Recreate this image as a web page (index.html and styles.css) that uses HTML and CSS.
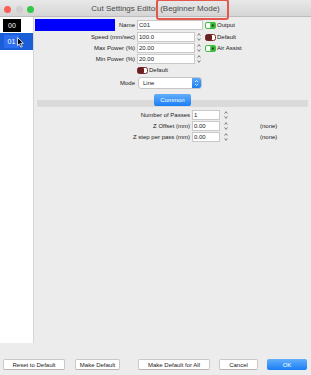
FILE: index.html
```html
<!DOCTYPE html>
<html lang="en">
<head>
    <meta charset="UTF-8">
    <title>Cut Settings Editor</title>
    <link rel="stylesheet" href="styles.css">
</head>
<body>
    <div class="titlebar">
        <div class="lights">
            <span class="light red"></span>
            <span class="light idle"></span>
            <span class="light green"></span>
        </div>
        <div class="title">Cut Settings Editor <span class="mark">(Beginner Mode)</span></div>
        <div></div>
    </div>

    <div class="main">
        <div class="layers">
            <div class="layer"><span class="tag tag-black">00</span></div>
            <div class="layer selected">
                <span class="tag tag-blue">01</span>
                <svg class="cursor" width="7" height="11" viewBox="0 0 7 11"><path d="M0.5 0.5 L0.5 8.6 L2.4 6.8 L3.8 10.2 L5.2 9.6 L3.8 6.3 L6.4 6.3 Z" fill="#000" stroke="#fff" stroke-width="0.8" stroke-linejoin="round"/></svg>
            </div>
        </div>

        <div class="settings">
            <div class="form">
                <div class="label name-cell"><span class="color-bar"></span><span>Name</span></div>
                <div class="field"><input class="input input-name" value="C01"></div>
                <div class="check"><svg class="toggle" width="11" height="7" viewBox="0 0 11 7"><rect x="0.5" y="0.5" width="10" height="6" rx="1.5" fill="#fff" stroke="#3dbf3d"/><rect x="5.2" y="0.5" width="5.3" height="6" rx="1" fill="#3dbf3d"/><rect x="6.8" y="2.5" width="2" height="2" fill="#1c3a1c"/></svg>Output</div>

                <div class="label">Speed (mm/sec)</div>
                <div class="field"><input class="input" value="100.0"><svg class="spin" width="4" height="10" viewBox="0 0 4 10"><path d="M0.6 3.6 L2 1.6 L3.4 3.6 M0.6 6.4 L2 8.4 L3.4 6.4" fill="none" stroke="#555" stroke-width="0.7"/></svg></div>
                <div class="check"><svg class="toggle" width="11" height="7" viewBox="0 0 11 7"><rect x="0.5" y="0.5" width="10" height="6" rx="2" fill="#fff" stroke="#7a2b2b"/><rect x="0.5" y="0.5" width="6.5" height="6" rx="1.5" fill="#6b1f1f"/></svg>Default</div>

                <div class="label">Max Power (%)</div>
                <div class="field"><input class="input" value="20.00"><svg class="spin" width="4" height="10" viewBox="0 0 4 10"><path d="M0.6 3.6 L2 1.6 L3.4 3.6 M0.6 6.4 L2 8.4 L3.4 6.4" fill="none" stroke="#555" stroke-width="0.7"/></svg></div>
                <div class="check"><svg class="toggle" width="11" height="7" viewBox="0 0 11 7"><rect x="0.5" y="0.5" width="10" height="6" rx="1.5" fill="#fff" stroke="#3dbf3d"/><rect x="5.2" y="0.5" width="5.3" height="6" rx="1" fill="#3dbf3d"/><rect x="6.8" y="2.5" width="2" height="2" fill="#1c3a1c"/></svg>Air Assist</div>

                <div class="label">Min Power (%)</div>
                <div class="field"><input class="input" value="20.00"><svg class="spin" width="4" height="10" viewBox="0 0 4 10"><path d="M0.6 3.6 L2 1.6 L3.4 3.6 M0.6 6.4 L2 8.4 L3.4 6.4" fill="none" stroke="#555" stroke-width="0.7"/></svg></div>
                <div></div>

                <div></div>
                <div class="check"><svg class="toggle" width="11" height="7" viewBox="0 0 11 7"><rect x="0.5" y="0.5" width="10" height="6" rx="2" fill="#fff" stroke="#7a2b2b"/><rect x="0.5" y="0.5" width="6.5" height="6" rx="1.5" fill="#6b1f1f"/></svg>Default</div>
                <div></div>

                <div class="label">Mode</div>
                <div class="field">
                    <div class="select"><span class="select-text">Line</span><span class="stepper"><svg width="5" height="8" viewBox="0 0 5 8"><path d="M1 3 L2.5 1.5 L4 3 M1 5 L2.5 6.5 L4 5" fill="none" stroke="#fff" stroke-width="0.8"/></svg></span></div>
                </div>
                <div></div>
            </div>

            <div class="tabs"><button class="tab">Common</button></div>

            <div class="common">
                <div class="label">Number of Passes</div>
                <input class="input" value="1">
                <svg class="spin" width="4" height="10" viewBox="0 0 4 10"><path d="M0.6 3.6 L2 1.6 L3.4 3.6 M0.6 6.4 L2 8.4 L3.4 6.4" fill="none" stroke="#555" stroke-width="0.7"/></svg>
                <div></div>

                <div class="label">Z Offset (mm)</div>
                <input class="input" value="0.00">
                <svg class="spin" width="4" height="10" viewBox="0 0 4 10"><path d="M0.6 3.6 L2 1.6 L3.4 3.6 M0.6 6.4 L2 8.4 L3.4 6.4" fill="none" stroke="#555" stroke-width="0.7"/></svg>
                <div class="note">(none)</div>

                <div class="label">Z step per pass (mm)</div>
                <input class="input" value="0.00">
                <svg class="spin" width="4" height="10" viewBox="0 0 4 10"><path d="M0.6 3.6 L2 1.6 L3.4 3.6 M0.6 6.4 L2 8.4 L3.4 6.4" fill="none" stroke="#555" stroke-width="0.7"/></svg>
                <div class="note">(none)</div>
            </div>
        </div>
    </div>

    <div class="footer">
        <button class="btn btn-reset">Reset to Default</button>
        <button class="btn btn-make">Make Default</button>
        <button class="btn btn-all">Make Default for All</button>
        <button class="btn btn-cancel">Cancel</button>
        <button class="btn btn-ok">OK</button>
    </div>
</body>
</html>
```

FILE: styles.css
```css
body {
    margin: 0;
    width: 311px;
    height: 375px;
    overflow: hidden;
    background-color: #ececec;
    font-family: 'Liberation Sans', Arial, sans-serif;
    font-size: 6px;
    color: #1a1a1a;
}
.titlebar {
    height: 17px;
    box-sizing: border-box;
    display: grid;
    grid-template-columns: 1fr auto 1fr;
    align-items: center;
    background: linear-gradient(#e9e9e9, #d5d5d5);
    border-bottom: 1px solid #bcbcbc;
}
.lights {
    display: flex;
    gap: 4.5px;
    padding-left: 4px;
    padding-top: 1px;
}
.light {
    width: 7px;
    height: 7px;
    border-radius: 50%;
}
.red {
    background-color: #fc5f57;
}
.idle {
    background-color: #d0d0d0;
}
.green {
    background-color: #34c84a;
}
.title {
    font-size: 8px;
    color: #4a4a4a;
    line-height: 17px;
    white-space: nowrap;
}
.mark {
    display: inline-block;
    position: relative;
}
.mark::after {
    content: '';
    position: absolute;
    left: -4px;
    right: -9px;
    top: -1px;
    bottom: -3px;
    border: 2px solid #e4574c;
    border-radius: 3px;
}
.main {
    display: flex;
    height: 326px;
}
.layers {
    width: 33px;
    background-color: #fff;
    border-right: 1px solid #d6d6d6;
    padding-top: 1px;
}
.layer {
    height: 15px;
    display: flex;
    align-items: center;
    padding-left: 3px;
}
.layer.selected {
    position: relative;
    height: 17px;
    padding-left: 4px;
    background-color: #1b5fd8;
}
.tag {
    height: 13px;
    line-height: 13px;
    text-align: center;
    color: #fff;
    font-size: 7px;
}
.tag-black {
    width: 18px;
    background-color: #000;
}
.tag-blue {
    width: 15px;
    background-color: #2d6ef0;
}
.cursor {
    position: absolute;
    left: 17px;
    top: 4px;
}
.settings {
    flex: 1;
    padding-top: 2px;
}
.form {
    display: grid;
    grid-template-columns: 100px 66px 1fr;
    grid-template-rows: 12px 10px 10px 10px 10px 13px;
    column-gap: 2px;
    row-gap: 1px;
    padding-left: 1px;
}
.label {
    display: flex;
    align-items: center;
    justify-content: flex-end;
    white-space: nowrap;
}
.name-cell {
    justify-content: space-between;
}
.color-bar {
    width: 80px;
    height: 12px;
    background-color: #0000fe;
}
.field {
    display: flex;
    align-items: center;
    gap: 2px;
}
.input {
    width: 58px;
    height: 10px;
    box-sizing: border-box;
    border: 1px solid #c9c9c9;
    background-color: #fff;
    padding: 0 1px;
    margin: 0;
    font-family: inherit;
    font-size: 6px;
    color: #1a1a1a;
    outline: none;
}
.input-name {
    width: 66px;
}
.check {
    display: flex;
    align-items: center;
    gap: 1px;
    white-space: nowrap;
}
.select {
    width: 64px;
    height: 12px;
    margin-left: 1px;
    box-sizing: border-box;
    display: flex;
    align-items: center;
    background-color: #fff;
    border: 1px solid #c6c6c6;
    border-radius: 3px;
    overflow: hidden;
}
.select-text {
    flex: 1;
    padding-left: 4px;
}
.stepper {
    width: 9px;
    height: 100%;
    display: flex;
    align-items: center;
    justify-content: center;
    background: linear-gradient(#5aa8fa, #1c7ff5);
}
.tabs {
    margin: 5px 3px 0;
    height: 13px;
    display: flex;
    justify-content: center;
    background: linear-gradient(transparent 6px, #dadada 6px);
    border-radius: 0 0 2px 2px;
}
.tab {
    width: 37px;
    height: 12px;
    padding: 0;
    border: none;
    border-radius: 2px;
    background: linear-gradient(#62aefa, #1a7ef5);
    color: #fff;
    font-family: inherit;
    font-size: 6px;
}
.common {
    display: grid;
    grid-template-columns: 156px 28px 9px 1fr;
    grid-auto-rows: 10px;
    column-gap: 2px;
    row-gap: 1px;
    margin-top: 3px;
    align-items: center;
}
.common .input {
    width: 28px;
    height: 10px;
}
.common .spin {
    margin-left: 2px;
}
.note {
    padding-left: 27px;
}
.footer {
    display: flex;
    padding-top: 16px;
}
.btn {
    height: 11px;
    padding: 0;
    margin: 0;
    box-sizing: border-box;
    background-color: #fff;
    border: 1px solid #c8c8c8;
    border-bottom-color: #b5b5b5;
    border-radius: 2px;
    font-family: inherit;
    font-size: 6px;
    color: #1a1a1a;
}
.btn-reset {
    width: 62px;
    margin-left: 3px;
}
.btn-make {
    width: 45px;
    margin-left: 10px;
}
.btn-all {
    width: 72px;
    margin-left: 18px;
}
.btn-cancel {
    width: 39px;
    margin-left: 9px;
}
.btn-ok {
    width: 40px;
    margin-left: 9px;
    border: none;
    background: linear-gradient(#62aefa, #1a7ef5);
    color: #fff;
}
```
